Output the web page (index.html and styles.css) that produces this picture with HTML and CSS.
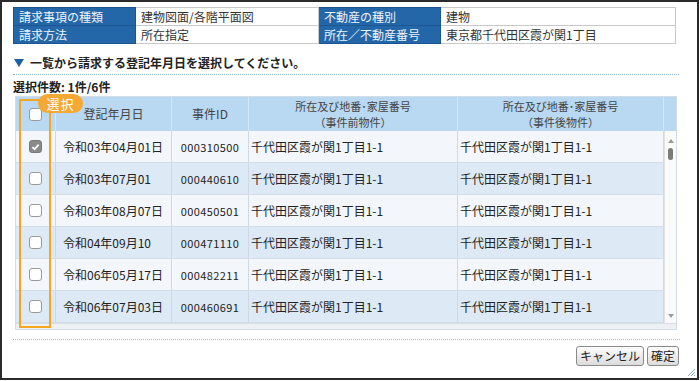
FILE: index.html
```html
<!DOCTYPE html>
<html lang="ja">
<head>
<meta charset="utf-8">
<link rel="stylesheet" href="styles.css">
</head>
<body>
<div class="frame">
  <table class="info">
    <tr>
      <th class="c1">請求事項の種類</th>
      <td class="c2">建物図面/各階平面図</td>
      <th class="c3">不動産の種別</th>
      <td class="c4">建物</td>
    </tr>
    <tr>
      <th>請求方法</th>
      <td>所在指定</td>
      <th>所在／不動産番号</th>
      <td>東京都千代田区霞が関1丁目</td>
    </tr>
  </table>

  <div class="heading"><span class="tri"></span>一覧から請求する登記年月日を選択してください。</div>
  <div class="count">選択件数: 1件/6件</div>

  <div class="grid">
    <div class="ghead">
      <div class="hc chk"><span class="box"></span></div>
      <div class="hc">登記年月日</div>
      <div class="hc">事件ID</div>
      <div class="hc two"><span class="hl">所在及び地番･家屋番号</span><span class="hl">（事件前物件）</span></div>
      <div class="hc two"><span class="hl">所在及び地番･家屋番号</span><span class="hl">（事件後物件）</span></div>
      <div class="hc sp"></div>
    </div>
    <div class="gbody">
      <div class="rows">
        <div class="row odd"><div class="cc chk"><span class="box on"><svg viewBox="0 0 12 12" width="12" height="12"><path d="M2.6 6.2 L5 8.4 L9.4 3.4" fill="none" stroke="#fff" stroke-width="1.8"/></svg></span></div><div class="cc d">令和03年04月01日</div><div class="cc id">000310500</div><div class="cc a">千代田区霞が関1丁目1-1</div><div class="cc a">千代田区霞が関1丁目1-1</div></div>
        <div class="row even"><div class="cc chk"><span class="box"></span></div><div class="cc d">令和03年07月01</div><div class="cc id">000440610</div><div class="cc a">千代田区霞が関1丁目1-1</div><div class="cc a">千代田区霞が関1丁目1-1</div></div>
        <div class="row odd"><div class="cc chk"><span class="box"></span></div><div class="cc d">令和03年08月07日</div><div class="cc id">000450501</div><div class="cc a">千代田区霞が関1丁目1-1</div><div class="cc a">千代田区霞が関1丁目1-1</div></div>
        <div class="row even"><div class="cc chk"><span class="box"></span></div><div class="cc d">令和04年09月10</div><div class="cc id">000471110</div><div class="cc a">千代田区霞が関1丁目1-1</div><div class="cc a">千代田区霞が関1丁目1-1</div></div>
        <div class="row odd"><div class="cc chk"><span class="box"></span></div><div class="cc d">令和06年05月17日</div><div class="cc id">000482211</div><div class="cc a">千代田区霞が関1丁目1-1</div><div class="cc a">千代田区霞が関1丁目1-1</div></div>
        <div class="row even"><div class="cc chk"><span class="box"></span></div><div class="cc d">令和06年07月03日</div><div class="cc id">000460691</div><div class="cc a">千代田区霞が関1丁目1-1</div><div class="cc a">千代田区霞が関1丁目1-1</div></div>
      </div>
      <div class="vscroll">
        <svg class="arr" viewBox="0 0 8 6" width="8" height="6"><path d="M4 1 L7 5 L1 5 Z" fill="#9a9a9a"/></svg>
        <div class="thumb"></div>
        <div class="track"></div>
        <svg class="arr" viewBox="0 0 8 6" width="8" height="6"><path d="M1 1 L7 1 L4 5 Z" fill="#9a9a9a"/></svg>
      </div>
    </div>
    <div class="gfoot"></div>
    <div class="sel-outline"></div>
    <div class="badge">選択</div>
  </div>

  <div class="sep"></div>
  <div class="buttons">
    <button class="btn">キャンセル</button>
    <button class="btn">確定</button>
  </div>
  <svg class="grip" viewBox="0 0 10 10" width="10" height="10"><path d="M9 2 L2 9 M9 5 L5 9 M9 8 L8 9" stroke="#8fb0cf" stroke-width="1"/></svg>
</div>
</body>
</html>
```

FILE: styles.css
```css
* { box-sizing: border-box; }
html, body { margin: 0; padding: 0; background: #fff; }
body {
  font-family: "Noto Sans CJK JP", "Noto Sans", sans-serif;
  font-size: 12px;
  color: #222;
}
.frame {
  position: relative;
  width: 699px;
  height: 380px;
  border: 2px solid #2b2b2b;
  padding: 5px 11px 0 11px;
}
.info {
  border-collapse: collapse;
  width: 662px;
  table-layout: fixed;
  font-size: 12px;
  line-height: 16px;
}
.info th, .info td {
  height: 18px;
  padding: 0 5px;
  border: 1px solid #c9c9c9;
  text-align: left;
  font-weight: normal;
  white-space: nowrap;
  overflow: hidden;
}
.info th {
  background: #2467a8;
  color: #eef4fb;
  border-color: #1d5590;
}
.info td { color: #333; background: #fff; }
.info .c1 { width: 122px; }
.info .c2 { width: 183px; }
.info .c3 { width: 122px; }
.info .c4 { width: 235px; }

.heading {
  margin-top: 11px;
  width: 666px;
  padding: 0 0 3px 1px;
  border-bottom: 1px dotted #8fb3da;
  font-size: 12px;
  line-height: 16px;
  font-weight: bold;
  color: #222;
  display: flex;
  align-items: center;
}
.tri {
  width: 0; height: 0;
  border-left: 5px solid transparent;
  border-right: 5px solid transparent;
  border-top: 8px solid #1f5fa6;
  margin-right: 6px;
}
.count {
  margin-top: 5px;
  font-weight: bold;
  font-size: 12px;
  line-height: 14px;
}
.grid {
  position: relative;
  margin: 2px 0 0 2px;
  width: 662px;
  border: 1px solid #d4dde6;
}
.ghead {
  display: grid;
  grid-template-columns: 40px 116px 77px 209px 206px 12px;
  height: 34px;
  background: #b9d8f2;
}
.hc {
  display: flex;
  align-items: center;
  justify-content: center;
  text-align: center;
  color: #444;
  font-size: 12px;
  line-height: 14px;
  border-right: 1px solid #d6e6f4;
}
.hc.two { flex-direction: column; font-size: 11px; }
.hl { display: block; line-height: 16px; }
.hc.sp { border-right: none; }
.gbody { display: flex; height: 192px; }
.rows { width: 648px; }
.row {
  display: grid;
  grid-template-columns: 40px 116px 77px 209px 206px;
  height: 32px;
  border-bottom: 1px solid #d3dde7;
}
.row.odd { background: #f3f6fa; }
.row.even { background: #dde9f5; }
.cc {
  display: flex;
  align-items: center;
  border-right: 1px solid #cfd9e3;
  white-space: nowrap;
  overflow: hidden;
}
.cc.chk, .hc.chk { justify-content: center; padding-left: 0; }
.cc.d { padding-left: 7px; font-size: 12px; }
.cc.id { justify-content: center; font-size: 11px; letter-spacing: 0.4px; }
.cc.a { padding-left: 2px; font-size: 12px; }
.box {
  width: 13px; height: 13px;
  border: 1px solid #9a9a9a;
  border-radius: 3px;
  background: #fff;
  display: flex;
  align-items: center;
  justify-content: center;
}
.box.on { background: #8a8a8a; border-color: #7a7a7a; }
.vscroll {
  width: 12px;
  background: #fafafa;
  border-left: 1px solid #e2e2e2;
  display: flex;
  flex-direction: column;
  align-items: center;
  padding: 7px 0 4px;
}
.thumb {
  width: 5px; height: 12px;
  background: #7c7c7c;
  border-radius: 3px;
  margin-top: 4px;
}
.track { flex: 1; }
.gfoot {
  height: 6px;
  background: #eef1f4;
  border-top: 1px solid #d6dee6;
}
.sel-outline {
  position: absolute;
  left: 3px; top: 2px;
  width: 32px; height: 229px;
  border: 2px solid #f5a623;
  pointer-events: none;
}
.badge {
  position: absolute;
  left: 22px; top: -3px;
  width: 45px; height: 19px;
  border-radius: 10px;
  background: #f6a834;
  color: #fff;
  font-size: 13px;
  line-height: 19px;
  text-align: center;
  letter-spacing: 1px;
}
.sep {
  margin-top: 9px;
  width: 667px;
  border-top: 1px dotted #b5b5b5;
}
.buttons {
  display: flex;
  justify-content: flex-end;
  gap: 3px;
  width: 666px;
  margin-top: 6px;
}
.btn {
  font-family: "Noto Sans CJK JP", sans-serif;
  font-size: 12px;
  line-height: 14px;
  height: 20px;
  padding: 0 3px;
  color: #222;
  background: linear-gradient(#fdfdfd, #dcdcdc);
  border: 1px solid #8a8a8a;
  border-radius: 3px;
}
.grip { position: absolute; right: 1px; bottom: 1px; }
```
